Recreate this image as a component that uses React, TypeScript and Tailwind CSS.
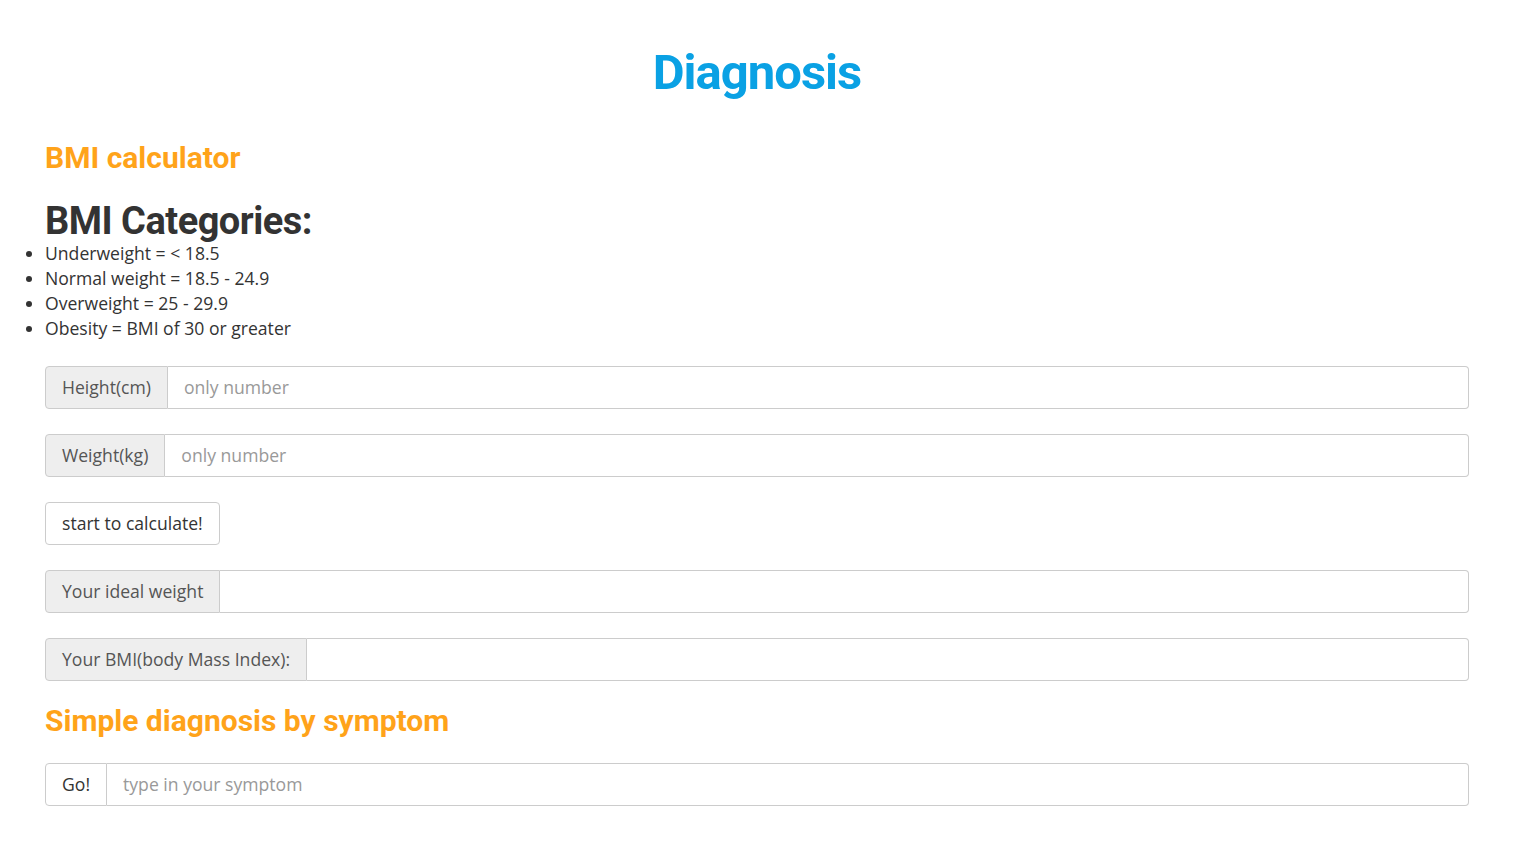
const Addon = ({ label, placeholder }: { label: string; placeholder?: string }) => {
  return (
    <div className="flex w-full h-[43px]">
      <span className="flex items-center px-4 bg-[#eeeeee] text-[#555] border border-[#cccccc] rounded-l-[4px] whitespace-nowrap">
        {label}
      </span>
      <input
        type="text"
        placeholder={placeholder}
        className="flex-1 px-4 border border-l-0 border-[#cccccc] rounded-r-[4px] text-[#555] placeholder:text-[#999] outline-none"
      />
    </div>
  );
};

const App = () => {
  return (
    <div className="min-h-screen bg-white font-['Open_Sans',sans-serif] text-[17.6px] text-[#333]">
      <div className="pl-[45px] pr-[55px]">
        <h1 className="pt-[42px] text-center font-['Roboto',sans-serif] font-bold text-[49px] leading-[62px] tracking-[-1px] text-[#0aa1e4]">
          Diagnosis
        </h1>
        <h2 className="mt-[34px] font-['Roboto',sans-serif] font-bold text-[30px] leading-[40px] text-[#ffa31a]">
          BMI calculator
        </h2>
        <h3 className="mt-[23px] font-['Roboto',sans-serif] font-bold text-[38px] leading-[40px] tracking-[-0.5px] text-[#333]">
          BMI Categories:
        </h3>
        <ul className="list-disc list-outside pl-0 leading-[25px] text-[#333]">
          <li>Underweight = &lt; 18.5</li>
          <li>Normal weight = 18.5 - 24.9</li>
          <li>Overweight = 25 - 29.9</li>
          <li>Obesity = BMI of 30 or greater</li>
        </ul>
        <div className="mt-[25px] flex flex-col gap-[25px]">
          <Addon label="Height(cm)" placeholder="only number" />
          <Addon label="Weight(kg)" placeholder="only number" />
          <div>
            <button className="h-[43px] px-4 bg-white border border-[#cccccc] rounded-[4px] text-[#333]">
              start to calculate!
            </button>
          </div>
          <Addon label="Your ideal weight" />
          <Addon label="Your BMI(body Mass Index):" />
        </div>
        <h2 className="mt-[20px] font-['Roboto',sans-serif] font-bold text-[30px] leading-[40px] text-[#ffa31a]">
          Simple diagnosis by symptom
        </h2>
        <div className="mt-[22px] flex w-full h-[43px]">
          <button className="px-4 bg-white text-[#333] border border-[#cccccc] rounded-l-[4px]">Go!</button>
          <input
            type="text"
            placeholder="type in your symptom"
            className="flex-1 px-4 border border-l-0 border-[#cccccc] rounded-r-[4px] text-[#555] placeholder:text-[#999] outline-none"
          />
        </div>
      </div>
    </div>
  );
};

export default App;
